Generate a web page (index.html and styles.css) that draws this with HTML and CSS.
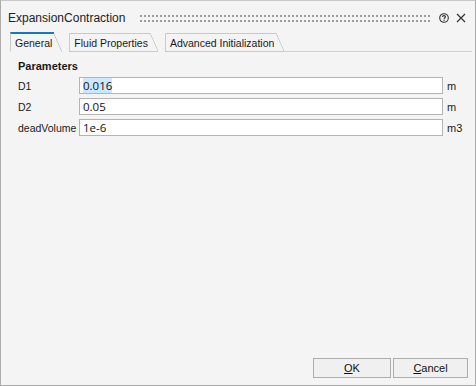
FILE: index.html
```html
<!DOCTYPE html>
<html>
<head>
<meta charset="utf-8">
<link rel="stylesheet" href="styles.css">
</head>
<body>
<div class="window">
  <div class="titlebar">
    <span class="title">ExpansionContraction</span>
    <span class="grip"></span>
    <svg class="help" width="10" height="10" viewBox="0 0 10 10"><circle cx="5" cy="5" r="4.3" fill="none" stroke="#333" stroke-width="1.1"/><path d="M3.5 4 C3.5 3 4.2 2.6 5 2.6 C5.9 2.6 6.5 3.1 6.5 3.8 C6.5 4.8 5.1 4.8 5.1 5.9" fill="none" stroke="#333" stroke-width="1.1"/><rect x="4.5" y="6.6" width="1.2" height="1.2" fill="#333"/></svg>
    <svg class="close" width="10" height="10" viewBox="0 0 10 10"><path d="M1 1 L9 9 M9 1 L1 9" stroke="#333" stroke-width="1.2"/></svg>
  </div>
  <div class="tabs">
    <div class="tab active">General</div>
    <div class="tab">Fluid Properties</div>
    <div class="tab">Advanced Initialization</div>
    <div class="tabfill"></div>
  </div>
  <div class="content">
    <div class="section">Parameters</div>
    <div class="grid">
      <label class="lbl">D1</label>
      <div class="field"><span class="sel">0.016</span></div>
      <span class="unit">m</span>
      <label class="lbl">D2</label>
      <div class="field">0.05</div>
      <span class="unit">m</span>
      <label class="lbl">deadVolume</label>
      <div class="field">1e-6</div>
      <span class="unit">m3</span>
    </div>
  </div>
  <div class="buttons">
    <button class="btn ok"><u>O</u>K</button>
    <button class="btn cancel"><u>C</u>ancel</button>
  </div>
</div>
</body>
</html>
```
FILE: styles.css
```css
html, body {
  margin: 0;
  padding: 0;
  background: #f4f4f4;
}
.window {
  width: 476px;
  height: 386px;
  box-sizing: border-box;
  border: 1px solid #ababab;
  border-top-color: #c8c8c8;
  background: #f4f4f4;
  display: flex;
  flex-direction: column;
  font-family: "Liberation Sans", Arial, sans-serif;
  font-size: 11px;
  color: #1a1a1a;
}
.titlebar {
  height: 30px;
  display: flex;
  align-items: center;
  padding: 4px 0 0 7px;
  box-sizing: border-box;
}
.title {
  font-size: 12px;
  color: #222;
}
.grip {
  flex: 1;
  height: 7px;
  margin: 0 9px 0 15px;
  background:
    linear-gradient(to bottom, transparent 2px, #f4f4f4 2px) 0 0 / 4px 5px,
    linear-gradient(to right, #9c9c9c 2px, transparent 2px) 0 0 / 4px 5px;
}
.help {
  margin-right: 7px;
}
.close {
  margin-right: 9px;
}
.tabs {
  display: flex;
  height: 21px;
  padding-left: 9px;
  box-sizing: border-box;
  align-items: flex-end;
  font-size: 10.5px;
}
.tab {
  position: relative;
  height: 19px;
  box-sizing: border-box;
  border-top: 1px solid #c9c9c9;
  border-left: 1px solid #c9c9c9;
  border-bottom: 1px solid #c9c9c9;
  padding: 3px 2px 0 4px;
  margin-right: 15px;
  color: #1a1a1a;
  white-space: nowrap;
}
.tab::after {
  content: "";
  position: absolute;
  top: -1px;
  right: -8px;
  width: 8px;
  height: 19px;
  background: linear-gradient(to top right, transparent calc(50% - 0.7px), #c4c4c4 50%, transparent calc(50% + 0.7px));
  border-bottom: 1px solid #c9c9c9;
  box-sizing: border-box;
}
.tab.active {
  height: 20px;
  border-top: 2px solid #1779ba;
  border-bottom: 1px solid #f4f4f4;
  padding-top: 3px;
}
.tab.active::after {
  top: 0;
  height: 19px;
  border-bottom-color: #f4f4f4;
}
.tabfill {
  flex: 1;
  height: 1px;
  background: #d0d0d0;
  margin-left: -7px;
  margin-right: 3px;
}
.content {
  flex: 1;
  padding: 8px 0 0 17px;
}
.section {
  font-weight: bold;
  margin-bottom: 5px;
}
.grid {
  display: grid;
  grid-template-columns: 61px 364px auto;
  row-gap: 4px;
  align-items: center;
}
.lbl {
  white-space: nowrap;
  font-size: 10.5px;
}
.field {
  height: 17px;
  box-sizing: border-box;
  border: 1px solid #b4b4b4;
  background: #fff;
  font-family: "Open Sans", "Liberation Sans", sans-serif;
  font-size: 11.5px;
  line-height: 15px;
  padding-left: 3px;
  color: #111;
}
.sel {
  background: #cce8ff;
}
.unit {
  padding-left: 4px;
}
.buttons {
  display: flex;
  justify-content: flex-end;
  gap: 2px;
  padding: 0 7px 7px 0;
}
.btn {
  height: 20px;
  box-sizing: border-box;
  border: 1px solid #adadad;
  background: #f0f0f0;
  font-family: "Liberation Sans", Arial, sans-serif;
  font-size: 11px;
  color: #111;
  padding: 0;
}
.ok {
  width: 78px;
}
.cancel {
  width: 75px;
}
```
